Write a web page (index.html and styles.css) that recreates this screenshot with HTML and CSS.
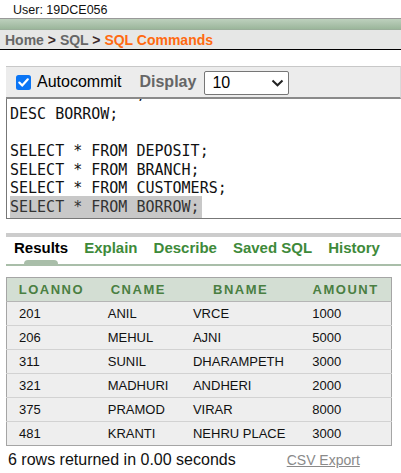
FILE: index.html
```html
<!DOCTYPE html>
<html>
<head>
<meta charset="utf-8">
<link rel="stylesheet" href="styles.css">
</head>
<body>
<div class="user">User: 19DCE056</div>
<div class="greenbar"></div>
<div class="crumbs"><span class="crumb">Home</span><span class="sep"> &gt; </span><span class="crumb">SQL</span><span class="sep"> &gt; </span><span class="current">SQL Commands</span></div>

<div class="panel">
  <div class="toolbar">
    <span class="check"><svg width="15" height="15" viewBox="0 0 15 15"><rect x="0" y="0" width="15" height="15" rx="2.5" fill="#0a75f5"/><path d="M3.3 7.6 L6.2 10.6 L11.8 4.3" fill="none" stroke="#fff" stroke-width="2.2" stroke-linecap="round" stroke-linejoin="round"/></svg></span>
    <span class="label">Autocommit</span>
    <span class="display">Display</span>
    <div class="select"><span>10</span><svg width="13" height="8" viewBox="0 0 13 8"><path d="M1.5 1.5 L6.5 6.3 L11.5 1.5" fill="none" stroke="#222" stroke-width="2"/></svg></div>
  </div>
  <div class="editor">
    <div class="partial"><span class="tail">DESC CUSTOMERS;</span></div>
<pre class="code">DESC BORROW;

SELECT * FROM DEPOSIT;
SELECT * FROM BRANCH;
SELECT * FROM CUSTOMERS;
<span class="sel">SELECT * FROM BORROW;</span></pre>
  </div>

  <div class="tabbar"></div>
  <div class="tabs">
    <span class="tab active">Results</span>
    <span class="tab">Explain</span>
    <span class="tab">Describe</span>
    <span class="tab">Saved SQL</span>
    <span class="tab">History</span>
  </div>
</div>

<table class="results">
  <colgroup><col class="c1"><col class="c2"><col class="c3"><col class="c4"></colgroup>
  <thead>
    <tr><th>LOANNO</th><th>CNAME</th><th>BNAME</th><th>AMOUNT</th></tr>
  </thead>
  <tbody>
    <tr><td>201</td><td>ANIL</td><td>VRCE</td><td>1000</td></tr>
    <tr><td>206</td><td>MEHUL</td><td>AJNI</td><td>5000</td></tr>
    <tr><td>311</td><td>SUNIL</td><td>DHARAMPETH</td><td>3000</td></tr>
    <tr><td>321</td><td>MADHURI</td><td>ANDHERI</td><td>2000</td></tr>
    <tr><td>375</td><td>PRAMOD</td><td>VIRAR</td><td>8000</td></tr>
    <tr><td>481</td><td>KRANTI</td><td>NEHRU PLACE</td><td>3000</td></tr>
  </tbody>
</table>

<div class="footer">
  <span class="count">6 rows returned in 0.00 seconds</span>
  <a class="csv" href="#">CSV Export</a>
</div>
</body>
</html>
```

FILE: styles.css
```css
html, body {
  margin: 0;
  padding: 0;
  background: #ffffff;
  font-family: "Liberation Sans", Arial, sans-serif;
  color: #000;
}

.user {
  height: 18px;
  padding-left: 13px;
  font-size: 12.5px;
  line-height: 21px;
  color: #111;
}

.greenbar {
  height: 10px;
  border-top: 1px solid #999;
  background: linear-gradient(#bdd0bd, #9bb69b);
  border-bottom: 1px solid #9aae9a;
}

.crumbs {
  height: 19px;
  background: #e6e7e6;
  border-bottom: 1px solid #000;
  padding-left: 5px;
  font-weight: bold;
  font-size: 14px;
  line-height: 20px;
}

.crumb { color: #676767; }
.sep { color: #3a2a2a; }
.current { color: #ff6a10; }

.panel {
  margin-top: 16px;
  margin-left: 6px;
}

.toolbar {
  height: 30px;
  background: #ececec;
  border-top: 1px solid #c8c8c8;
  border-right: 1px solid #d8d8d8;
  border-bottom: 2px solid #8a8a8a;
  display: flex;
  align-items: center;
  padding-left: 10px;
}

.check {
  width: 15px;
  height: 15px;
  display: flex;
  margin-top: 1px;
}

.label {
  margin-left: 6px;
  font-size: 16px;
  color: #000;
}

.display {
  margin-left: 18px;
  font-size: 16px;
  font-weight: bold;
  color: #666;
}

.select {
  margin-left: 8px;
  width: 85px;
  height: 24px;
  box-sizing: border-box;
  background: #fff;
  border: 1px solid #767676;
  border-radius: 2px;
  display: flex;
  align-items: center;
  justify-content: space-between;
  padding: 0 4px 0 7px;
  font-size: 16px;
  margin-top: 1px;
}

.select svg { margin-top: 1px; }

.editor {
  height: 119px;
  border-left: 1px solid #777;
  border-bottom: 1px solid #777;
  overflow: hidden;
  background: #fff;
}

.partial {
  height: 6px;
  overflow: hidden;
  position: relative;
  font-family: "DejaVu Sans Mono", "Liberation Mono", monospace;
  font-size: 15px;
  line-height: 18.6px;
  color: #111;
}

.tail {
  position: absolute;
  left: 3px;
  top: -14px;
  white-space: pre;
}

.code {
  margin: 0;
  padding-left: 3px;
  font-family: "DejaVu Sans Mono", "Liberation Mono", monospace;
  font-size: 15px;
  line-height: 18.6px;
  color: #111;
}

.sel {
  background: #c8c8c8;
  padding: 2px 2px 2px 0;
  color: #333;
}

.tabbar {
  margin-top: 14px;
  height: 4px;
  background: #cccccc;
}

.tabs {
  display: flex;
  gap: 16px;
  padding-left: 8px;
  height: 29px;
  padding-top: 2px;
  box-sizing: border-box;
  border-bottom: 2px solid #a9bea9;
  position: relative;
  font-size: 15px;
  font-weight: bold;
  line-height: 18px;
}

.tab { color: #3e8a3a; position: relative; }
.tab.active { color: #000; }

.tab.active::after {
  content: "";
  position: absolute;
  left: 10px;
  width: 34px;
  top: 21px;
  height: 5px;
  background: #a9bea9;
  border-radius: 4px 4px 0 0;
}

.results {
  margin: 11px 0 0 6px;
  border-collapse: collapse;
  border: 1px solid #a5a5a5;
  table-layout: fixed;
  width: 386px;
  font-size: 13px;
}

.c1 { width: 89px; }
.c2 { width: 85px; }
.c3 { width: 119px; }
.c4 { width: 91px; }

.results th {
  height: 23px;
  padding: 0;
  background: #d3ded3;
  color: #4a7f42;
  font-size: 13px;
  letter-spacing: 1.5px;
  text-align: center;
  border-bottom: 1px solid #b5b5b5;
}

.results td {
  height: 23px;
  padding: 0 0 0 12px;
  background: #eeeeee;
  color: #111;
  border-top: 1px solid #d2d2d2;
}

.results tbody tr:first-child td { border-top: none; }

.footer {
  display: flex;
  gap: 51px;
  align-items: baseline;
  padding-left: 8px;
  margin-top: 5px;
}

.count {
  font-size: 16px;
  color: #111;
}

.csv {
  font-size: 14px;
  color: #8a8a8a;
  text-decoration: underline;
}
```
